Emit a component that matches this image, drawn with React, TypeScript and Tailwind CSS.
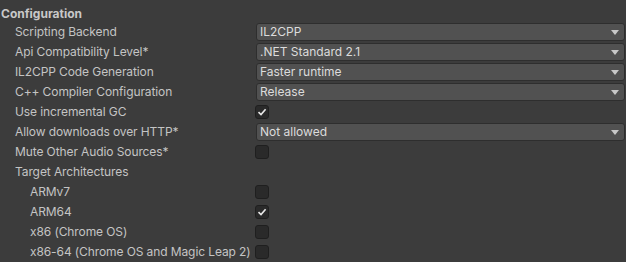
const rows: { label: string; indent?: boolean; kind: "drop" | "check" | "none"; value?: string; checked?: boolean }[] = [
  { label: "Scripting Backend", kind: "drop", value: "IL2CPP" },
  { label: "Api Compatibility Level*", kind: "drop", value: ".NET Standard 2.1" },
  { label: "IL2CPP Code Generation", kind: "drop", value: "Faster runtime" },
  { label: "C++ Compiler Configuration", kind: "drop", value: "Release" },
  { label: "Use incremental GC", kind: "check", checked: true },
  { label: "Allow downloads over HTTP*", kind: "drop", value: "Not allowed" },
  { label: "Mute Other Audio Sources*", kind: "check", checked: false },
  { label: "Target Architectures", kind: "none" },
  { label: "ARMv7", indent: true, kind: "check", checked: false },
  { label: "ARM64", indent: true, kind: "check", checked: true },
  { label: "x86 (Chrome OS)", indent: true, kind: "check", checked: false },
  { label: "x86-64 (Chrome OS and Magic Leap 2)", indent: true, kind: "check", checked: false },
];

function Check({ on }: { on?: boolean }) {
  return (
    <div className="w-[14px] h-[14px] rounded-[3px] bg-[#2a2a2a] border border-[#1f1f1f] flex items-center justify-center">
      {on && (
        <svg width="10" height="10" viewBox="0 0 10 10">
          <path d="M1.5 5.2 L4 7.6 L8.6 2.2" fill="none" stroke="#e8e8e8" strokeWidth="1.6" />
        </svg>
      )}
    </div>
  );
}

export default function App() {
  return (
    <div className="w-[626px] h-[262px] bg-[#3c3c3c] text-[#c4c4c4] text-[12px] leading-none overflow-hidden" style={{ fontFamily: "Inter, 'Noto Sans', sans-serif" }}>
      <div className="h-[22px] pt-[6px] flex items-center pl-[1px] font-bold text-[#c8c8c8]">Configuration</div>
      {rows.map((r) => (
        <div key={r.label} className="h-[20px] flex items-center">
          <div className={`w-[255px] shrink-0 whitespace-nowrap tracking-[-0.1px] ${r.indent ? "pl-[30px]" : "pl-[15px]"}`}>{r.label}</div>
          {r.kind === "drop" && (
            <div className="flex-1 ml-[1px] mr-[1px] h-[18px] rounded-[3px] bg-[#515151] border border-[#2e2e2e] flex items-center justify-between pl-[3px] pr-[5px] text-[#dcdcdc]">
              <span>{r.value}</span>
              <svg width="8" height="5" viewBox="0 0 8 5">
                <path d="M0 0 H8 L4 5 Z" fill="#c8c8c8" />
              </svg>
            </div>
          )}
          {r.kind === "check" && <Check on={r.checked} />}
        </div>
      ))}
    </div>
  );
}
